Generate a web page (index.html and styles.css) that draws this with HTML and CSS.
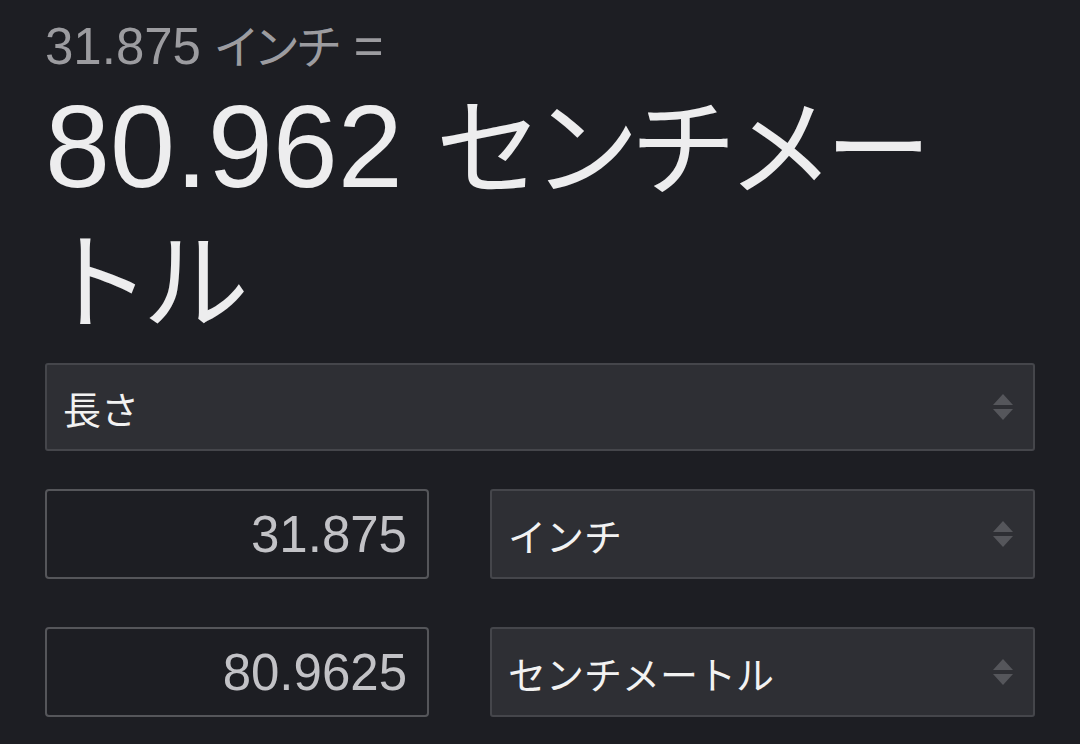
FILE: index.html
```html
<!DOCTYPE html>
<html lang="ja">
<head>
<meta charset="utf-8">
<link rel="stylesheet" href="styles.css">
</head>
<body>
<main class="converter">
  <div class="summary">31.875 <span class="kana">インチ</span> =</div>
  <div class="result">80.962 <span class="kana kana-big">センチメートル</span></div>
  <div class="select select-wide">
    <span class="select-label">長さ</span>
    <svg class="arrows" width="20" height="30" viewBox="0 0 20 30"><path d="M10 2 L20 13 L0 13 Z M0 17 L20 17 L10 28 Z" fill="#55565b"/></svg>
  </div>
  <div class="row row-first">
    <div class="field">31.875</div>
    <div class="select">
      <span class="select-label">インチ</span>
      <svg class="arrows" width="20" height="30" viewBox="0 0 20 30"><path d="M10 2 L20 13 L0 13 Z M0 17 L20 17 L10 28 Z" fill="#55565b"/></svg>
    </div>
  </div>
  <div class="row">
    <div class="field">80.9625</div>
    <div class="select">
      <span class="select-label">センチメートル</span>
      <svg class="arrows" width="20" height="30" viewBox="0 0 20 30"><path d="M10 2 L20 13 L0 13 Z M0 17 L20 17 L10 28 Z" fill="#55565b"/></svg>
    </div>
  </div>
</main>
</body>
</html>
```

FILE: styles.css
```css
html, body {
  margin: 0;
  padding: 0;
  background: #1d1e23;
}
body {
  font-family: "Liberation Sans", "Noto Sans CJK JP", sans-serif;
  width: 1080px;
  height: 744px;
  overflow: hidden;
}
.converter {
  padding: 19px 45px 0 45px;
  display: flex;
  flex-direction: column;
}
.summary {
  font-size: 51px;
  line-height: 56px;
  color: #9c9ca0;
  font-feature-settings: "palt";
}
.kana {
  font-size: 0.91em;
  line-height: 1;
}
.kana-big {
  letter-spacing: -9px;
}
.result {
  margin-top: 5px;
  font-size: 117px;
  line-height: 134px;
  color: #ededee;
  width: 930px;
}
.select {
  box-sizing: border-box;
  height: 90px;
  background: #2e2f34;
  border: 2px solid #45464b;
  border-radius: 3px;
  display: flex;
  align-items: center;
  justify-content: space-between;
  padding: 0 20px 0 16px;
}
.select-wide {
  margin-top: 15px;
  height: 88px;
}
.select-label {
  font-size: 38px;
  color: #f2f2f2;
}
.arrows {
  display: block;
}
.row {
  margin-top: 48px;
  display: grid;
  grid-template-columns: 384px 1fr;
  column-gap: 61px;
}
.row-first {
  margin-top: 38px;
}
.field {
  box-sizing: border-box;
  height: 90px;
  border: 2px solid #55565a;
  border-radius: 4px;
  display: flex;
  align-items: center;
  justify-content: flex-end;
  padding: 0 20px 0 16px;
  font-size: 51px;
  color: #c2c2c6;
}
```
